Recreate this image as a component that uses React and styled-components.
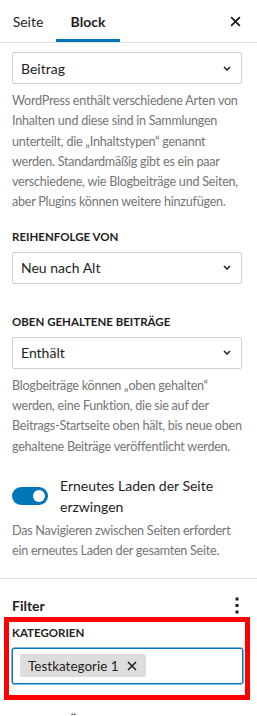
import styled, { createGlobalStyle } from "styled-components";

const Global = createGlobalStyle`
  body {
    margin: 0;
    background: #fff;
    font-family: Lato, "Open Sans", sans-serif;
    color: #1e1e1e;
  }
`;

const Sidebar = styled.div`
  width: 257px;
  height: 716px;
  overflow: hidden;
  background: #fff;
`;

const TabBar = styled.div`
  display: flex;
  align-items: stretch;
  height: 42px;
  border-bottom: 1px solid #e0e0e0;
`;

const Tab = styled.div`
  width: ${(p) => p.$w}px;
  display: flex;
  align-items: center;
  justify-content: center;
  font-size: 14px;
  font-weight: ${(p) => (p.$active ? 700 : 400)};
  box-shadow: ${(p) => (p.$active ? "inset 0 -3px 0 #0075b8" : "none")};
`;

const CloseButton = styled.div`
  margin-left: auto;
  width: 44px;
  display: flex;
  align-items: center;
  justify-content: center;
`;

const PanelBody = styled.div`
  padding: 9px 12px 16px 12px;
  border-bottom: 1px solid #e0e0e0;
`;

const NextSection = styled.div`
  padding: 12px 12px 0;
`;

const Select = styled.div`
  height: 30px;
  margin-right: 3px;
  border: 1px solid #cfcfd2;
  border-radius: 2px;
  display: flex;
  align-items: center;
  justify-content: space-between;
  padding: 0 10px 0 8px;
  font-size: 14px;
`;

const Help = styled.p`
  margin: ${(p) => p.$top ?? 7}px 0 0;
  font-size: 12.6px;
  letter-spacing: -0.25px;
  line-height: 20.3px;
  color: #757575;
`;

const Label = styled.div`
  margin-top: ${(p) => p.$top}px;
  margin-bottom: 7px;
  font-size: 11.5px;
  line-height: 16px;
  font-weight: 700;
  text-transform: uppercase;
  color: #1e1e1e;
`;

const ToggleRow = styled.div`
  margin-top: 18px;
  display: flex;
  align-items: center;
  gap: 12px;
`;

const Track = styled.span`
  flex: none;
  width: 36px;
  height: 18px;
  border-radius: 9px;
  background: #0075b8;
  position: relative;
`;

const Thumb = styled.span`
  position: absolute;
  top: 3px;
  right: 3px;
  width: 12px;
  height: 12px;
  border-radius: 50%;
  background: #fff;
`;

const ToggleText = styled.span`
  max-width: 175px;
  font-size: 14px;
  line-height: 21px;
`;

const PanelHeader = styled.div`
  display: flex;
  align-items: center;
  justify-content: space-between;
  padding: 16px 18px 0 12px;
  line-height: 22px;
  font-size: 14px;
  font-weight: 700;
`;

const Highlight = styled.div`
  margin: 0 7px 0 4px;
  border: 5px solid #ff0000;
  padding: 3px 2px 11px 3px;
`;

const TokenField = styled.div`
  height: 36px;
  box-sizing: border-box;
  border: 1px solid #0075b8;
  box-shadow: 0 0 0 0.5px #0075b8;
  border-radius: 2px;
  display: flex;
  align-items: center;
  padding: 0 7px;
`;

const Chip = styled.span`
  display: inline-flex;
  align-items: center;
  gap: 8px;
  height: 23px;
  padding: 0 9px 0 8px;
  background: #ddd;
  border-radius: 2px;
  font-size: 13.5px;
`;

const Chevron = () => (
  <svg width="8" height="5" viewBox="0 0 8 5">
    <path d="M1 1l3 3 3-3" fill="none" stroke="#1e1e1e" strokeWidth="1.5" />
  </svg>
);

const SmallX = ({ size = 10, w = 1.5 }) => (
  <svg width={size} height={size} viewBox="0 0 10 10">
    <path d="M1 1l8 8M9 1L1 9" stroke="#1e1e1e" strokeWidth={w} />
  </svg>
);

const Kebab = () => (
  <svg width="4" height="18" viewBox="0 0 4 18">
    <rect x="0.5" y="0.5" width="3" height="3" fill="#1e1e1e" />
    <rect x="0.5" y="7" width="3" height="3" fill="#1e1e1e" />
    <rect x="0.5" y="13.5" width="3" height="3" fill="#1e1e1e" />
  </svg>
);

export default function App() {
  return (
    <Sidebar>
      <Global />
      <TabBar>
        <Tab $w={56}>Seite</Tab>
        <Tab $w={64} $active>
          Block
        </Tab>
        <CloseButton>
          <SmallX size={11} w={1.6} />
        </CloseButton>
      </TabBar>
      <PanelBody>
        <Select>
          Beitrag
          <Chevron />
        </Select>
        <Help>
          WordPress enthält verschiedene Arten von Inhalten und diese sind in
          Sammlungen unterteilt, die „Inhaltstypen“ genannt werden.
          Standardmäßig gibt es ein paar verschiedene, wie Blogbeiträge und
          Seiten, aber Plugins können weitere hinzufügen.
        </Help>
        <Label $top={16}>Reihenfolge von</Label>
        <Select>
          Neu nach Alt
          <Chevron />
        </Select>
        <Label $top={30}>Oben gehaltene Beiträge</Label>
        <Select>
          Enthält
          <Chevron />
        </Select>
        <Help>
          Blogbeiträge können „oben gehalten“ werden, eine Funktion, die sie
          auf der Beitrags-Startseite oben hält, bis neue oben gehaltene
          Beiträge veröffentlicht werden.
        </Help>
        <ToggleRow>
          <Track>
            <Thumb />
          </Track>
          <ToggleText>Erneutes Laden der Seite erzwingen</ToggleText>
        </ToggleRow>
        <Help $top={4}>
          Das Navigieren zwischen Seiten erfordert ein erneutes Laden der
          gesamten Seite.
        </Help>
      </PanelBody>
      <PanelHeader>
        Filter
        <Kebab />
      </PanelHeader>
      <Highlight>
        <Label $top={0}>Kategorien</Label>
        <TokenField>
          <Chip>
            Testkategorie 1
            <SmallX size={10} w={1.5} />
          </Chip>
        </TokenField>
      </Highlight>
      <NextSection>
        <Label $top={0}>Schlagwörter</Label>
      </NextSection>
    </Sidebar>
  );
}
